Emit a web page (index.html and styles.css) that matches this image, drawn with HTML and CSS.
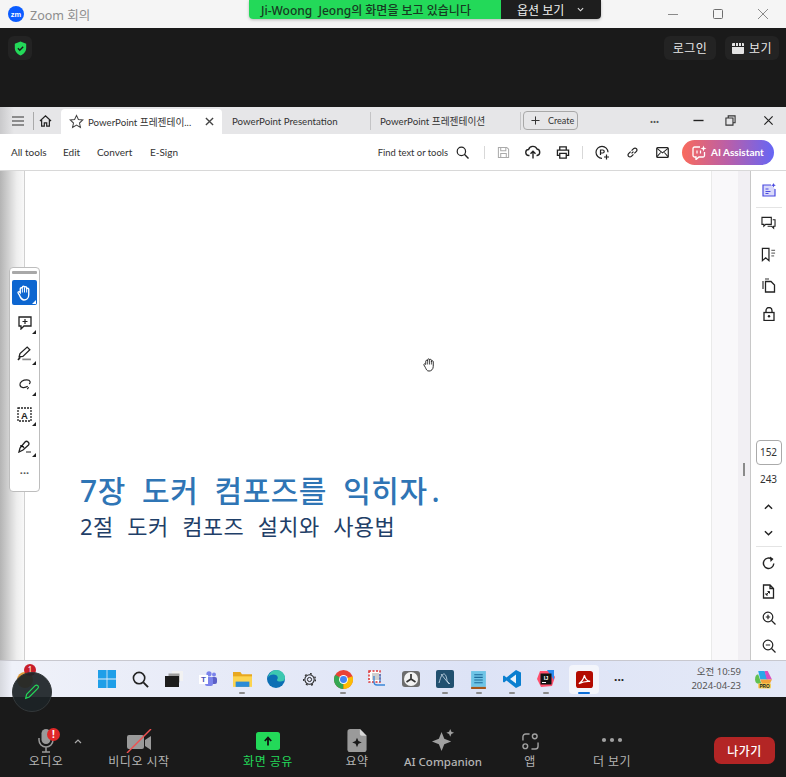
FILE: index.html
```html
<!DOCTYPE html>
<html lang="ko">
<head>
<meta charset="utf-8">
<title>Zoom 회의</title>
<link rel="stylesheet" href="styles.css">
</head>
<body>
<div class="app">
  <header class="titlebar">
    <svg class="zm-logo" viewBox="0 0 16 16" width="16" height="16"><circle cx="8" cy="8" r="8" fill="#0b5cff"/><text x="8" y="10.5" font-size="7.5" font-weight="700" text-anchor="middle" fill="#fff" font-family="Liberation Sans">zm</text></svg>
    <span class="title-text">Zoom 회의</span>
    <div class="win-ctrls">
      <svg viewBox="0 0 12 12" width="12" height="12"><path d="M1 6.500h10" stroke="#8a8a8a" fill="none"/></svg>
      <svg viewBox="0 0 12 12" width="12" height="12"><rect x="1.500" y="1.500" width="9" height="9" rx="1" stroke="#6e6e6e" fill="none"/></svg>
      <svg viewBox="0 0 12 12" width="12" height="12"><path d="M1 1l10 10M11 1L1 11" stroke="#8a8a8a" fill="none"/></svg>
    </div>
  </header>

  <section class="zoom-top">
    <div class="shield-btn">
      <svg viewBox="0 0 16 18" width="13" height="15"><path d="M8 .5l7 2.600v5.200c0 4.300-3 7.600-7 9.200-4-1.600-7-4.900-7-9.200V3.100z" fill="#23d959"/><path d="M4.800 8.800l2.300 2.300 4.200-4.300" stroke="#1a1a1a" stroke-width="1.700" fill="none"/></svg>
    </div>
    <div class="top-actions">
      <div class="dark-btn btn-login">로그인</div>
      <div class="dark-btn btn-view">
        <svg viewBox="0 0 12 11" width="12" height="11"><path d="M0 4h12v6a1 1 0 0 1-1 1H1a1 1 0 0 1-1-1z M1 0h2v3H0V1a1 1 0 0 1 1-1z M4 0h2v3H4z M7 0h2v3H7z M10 0h1a1 1 0 0 1 1 1v2h-2z" fill="#e4e4e4"/></svg>
        <span>보기</span>
      </div>
    </div>
  </section>

  <section class="acrobat">
    <nav class="tabbar">
      <svg class="menu-ic" viewBox="0 0 12 10" width="12" height="10"><path d="M0 1h12M0 5h12M0 9h12" stroke="#333" stroke-width="1.100"/></svg>
      <i class="tab-sep first"></i>
      <svg class="home-ic" viewBox="0 0 14 13" width="13" height="12"><path d="M1 6.500L7 1l6 5.500M2.800 5.500V12h2.900V8.500h2.600V12h2.900V5.500" stroke="#222" stroke-width="1.300" fill="none"/></svg>
      <div class="tab active">
        <svg viewBox="0 0 16 16" width="15" height="15"><path d="M8 1.500l2 4.400 4.700.5-3.500 3.200 1 4.700L8 11.900 3.800 14.300l1-4.700L1.300 6.400 6 5.900z" stroke="#444" stroke-width="1.100" fill="none"/></svg>
        <span class="tab-name">PowerPoint 프레젠테이...</span>
        <svg class="tab-x" viewBox="0 0 10 10" width="9" height="9"><path d="M1 1l8 8M9 1L1 9" stroke="#444" stroke-width="1.500"/></svg>
      </div>
      <div class="tab tab2">PowerPoint Presentation</div>
      <i class="tab-sep"></i>
      <div class="tab tab3">PowerPoint 프레젠테이션</div>
      <i class="tab-sep"></i>
      <div class="create"><svg viewBox="0 0 10 10" width="9" height="9"><path d="M5 .5v9M.5 5h9" stroke="#333" stroke-width="1.100"/></svg><span>Create</span></div>
      <div class="acro-win">
        <span class="dots">···</span>
        <svg class="aw-min" viewBox="0 0 12 12" width="11" height="11"><path d="M.5 6h11" stroke="#222" stroke-width="1.500"/></svg>
        <svg class="aw-max" viewBox="0 0 12 12" width="11" height="11"><path d="M3.500 3V1h7.500v7.500H9M1 3.300h7.700V11H1z" stroke="#333" stroke-width="1.200" fill="none"/></svg>
        <svg class="aw-close" viewBox="0 0 12 12" width="11" height="11"><path d="M1.500 1.500l9 9M10.500 1.500l-9 9" stroke="#222" stroke-width="1.300"/></svg>
      </div>
    </nav>
    <div class="toolbar">
      <div class="menu"><span class="m1">All tools</span><span class="m2">Edit</span><span class="m3">Convert</span><span>E-Sign</span></div>
      <div class="tools">
        <span class="find">Find text or tools</span>
        <svg viewBox="0 0 14 14" width="13" height="13"><circle cx="5.800" cy="5.800" r="4.500" stroke="#222" stroke-width="1.300" fill="none"/><path d="M9 9l4.500 4.500" stroke="#222" stroke-width="1.500"/></svg>
        <i class="tool-sep s1"></i>
        <svg viewBox="0 0 14 14" width="13" height="13"><path d="M1.500 1.500h9l2 2v9h-11zM4 1.500v3.500h5.500v-3.500M4 12.500V8h6v4.500" stroke="#aaa" stroke-width="1.100" fill="none"/></svg>
        <svg class="t-upload" viewBox="0 0 16 14" width="16" height="14"><path d="M4.500 10.500H4a3 3 0 0 1-.4-6A4.500 4.500 0 0 1 12 4a3.300 3.300 0 0 1 0 6.500h-.5M8 13.500V6.500M5.500 8.800L8 6.300l2.500 2.500" stroke="#222" stroke-width="1.400" fill="none"/></svg>
        <svg class="t-print" viewBox="0 0 14 14" width="14" height="13"><path d="M3.500 4V1h7v3M3.500 10H1V4.500h12V10h-2.500M3.500 8h7v5h-7z" stroke="#222" stroke-width="1.400" fill="none"/></svg>
        <i class="tool-sep"></i>
        <svg class="t-share" viewBox="0 0 15 15" width="15" height="15"><path d="M7 13.300A6 6 0 1 1 13 7.300M5.500 10V5h2.200a1.500 1.500 0 0 1 0 3H5.500M11.500 9.500v5M9 12h5" stroke="#222" stroke-width="1.200" fill="none"/></svg>
        <svg class="t-link" viewBox="0 0 14 14" width="13" height="13"><path d="M6 8l2-2M5 6L2.800 8.200a2.100 2.100 0 0 0 3 3L8 9M6 5l2.200-2.200a2.100 2.100 0 0 1 3 3L9 8" stroke="#222" stroke-width="1.300" fill="none"/></svg>
        <svg class="t-mail" viewBox="0 0 14 12" width="13" height="11"><rect x=".7" y=".7" width="12.600" height="10.600" rx="1" stroke="#222" stroke-width="1.300" fill="none"/><path d="M1 1.500l6 5 6-5M1 10.500l4-4.500M13 10.500L9 6" stroke="#222" stroke-width="1.100" fill="none"/></svg>
        <div class="ai-btn">
          <svg viewBox="0 0 15 15" width="15" height="15"><path d="M8 2H2.500A1.500 1.500 0 0 0 1 3.500v7A1.500 1.500 0 0 0 2.500 12H4v2.500L7 12h4a1.500 1.500 0 0 0 1.500-1.500V7" stroke="#fff" stroke-width="1.300" fill="none"/><path d="M11.500.5l.8 2.200 2.200.8-2.200.8-.8 2.200-.8-2.200-2.200-.8 2.200-.8z" fill="#fff"/><path d="M5 5.500v3M8.500 5.500v3" stroke="#fff" stroke-width="1.200"/></svg>
          <span>AI Assistant</span>
        </div>
      </div>
    </div>
    <div class="workspace">
      <div class="gutter"></div>
      <main class="page">
        <h1 class="h-main">7장 도커 컴포즈를 익히자<span class="period">.</span></h1>
        <h2 class="h-sub">2절 도커 컴포즈 설치와 사용법</h2>
      </main>
      <div class="scroller"><i class="scroll-thumb"></i></div>
      <aside class="rail">
        <div class="rail-top">
          <svg viewBox="0 0 14 14" width="14" height="14"><path d="M9 2H1v11h12V6" stroke="#4b4be0" stroke-width="1.200" fill="#d9d9fa"/><path d="M3.500 6h3M3.500 8.500h5M3.500 10.500h3" stroke="#4b4be0" stroke-width="1"/><path d="M11.500 0l.7 1.600 1.600.7-1.600.7-.7 1.600-.7-1.600-1.600-.7 1.600-.7z" fill="#4b4be0"/></svg>
          <i class="rail-line"></i>
          <svg class="r-comment" viewBox="0 0 16 15" width="15" height="14"><path d="M1 1.500h10v7.500H5l-2 2V9H1z" stroke="#222" stroke-width="1.200" fill="none"/><path d="M12.500 4H15v7h-1.500v2l-2-2H7" stroke="#222" stroke-width="1.200" fill="none"/></svg>
          <svg class="r-mark" viewBox="0 0 16 15" width="15" height="15"><path d="M1.500 1h7v13L5 11l-3.500 3z" stroke="#222" stroke-width="1.300" fill="none"/><path d="M11 3h4M11 6h4M11 9h3" stroke="#444"/></svg>
          <svg class="r-pages" viewBox="0 0 14 15" width="14" height="15"><path d="M3 1H7M1 3v8" stroke="#333" stroke-width="1.200" fill="none"/><path d="M3.500 3.500H9l3.500 3.500v7h-9z" stroke="#222" stroke-width="1.300" fill="none"/></svg>
          <svg class="r-lock" viewBox="0 0 12 14" width="12" height="14"><rect x="1" y="5.500" width="10" height="8" stroke="#222" stroke-width="1.300" fill="none"/><path d="M3 5.500V3.500a3 3 0 0 1 6 0v2" stroke="#222" stroke-width="1.300" fill="none"/><circle cx="6" cy="9.300" r="1.200" fill="#222"/></svg>
        </div>
        <div class="rail-bottom">
          <div class="page-input">152</div>
          <div class="page-total">243</div>
          <svg class="chev-up" viewBox="0 0 10 6" width="9" height="6"><path d="M1 5l4-4 4 4" stroke="#222" stroke-width="1.600" fill="none"/></svg>
          <svg class="chev-down" viewBox="0 0 10 6" width="9" height="6"><path d="M1 1l4 4 4-4" stroke="#222" stroke-width="1.600" fill="none"/></svg>
          <i class="rail-line wide"></i>
          <svg class="r-rot" viewBox="0 0 14 14" width="14" height="14"><path d="M11.800 7.500A5.200 5.200 0 1 1 10 3.300" stroke="#222" stroke-width="1.400" fill="none"/><path d="M8 .5l3.500 2.500L8.500 6z" fill="#222"/></svg>
          <svg class="r-doc" viewBox="0 0 14 15" width="14" height="15"><path d="M1.500 1h6.500l3.500 3.500V14h-10zM8 1v3.500h3.500" stroke="#222" stroke-width="1.300" fill="none"/><path d="M4 11l3.500-3.500M4 9v2h2M7.500 9.500v-2h-2" stroke="#222" fill="none"/></svg>
          <svg class="r-zi" viewBox="0 0 14 14" width="14" height="14"><circle cx="6" cy="6" r="4.800" stroke="#222" stroke-width="1.200" fill="none"/><path d="M9.500 9.500l4 4M3.800 6h4.400M6 3.800v4.400" stroke="#222" stroke-width="1.200"/></svg>
          <svg class="r-zo" viewBox="0 0 14 14" width="14" height="14"><circle cx="6" cy="6" r="4.800" stroke="#222" stroke-width="1.200" fill="none"/><path d="M9.500 9.500l4 4M3.800 6h4.400" stroke="#222" stroke-width="1.200"/></svg>
        </div>
      </aside>
    </div>
    <footer class="taskbar">
      <div class="task-icons">
        <div class="ti"><svg viewBox="0 0 18 18" width="18" height="18"><path d="M0 0h8.600v8.600H0zM9.400 0H18v8.600H9.400zM0 9.400h8.600V18H0zM9.400 9.400H18V18H9.400z" fill="#1f9fe8"/></svg></div>
        <div class="ti"><svg viewBox="0 0 18 18" width="17" height="17"><circle cx="7.500" cy="7.500" r="6" stroke="#222" stroke-width="1.700" fill="none"/><path d="M12 12l5 5" stroke="#222" stroke-width="2"/></svg></div>
        <div class="ti"><svg viewBox="0 0 18 16" width="18" height="16"><rect x="7" y="0" width="11" height="10" fill="#f2f2f2"/><rect x="3.500" y="2.500" width="11" height="9" fill="#9d9d9d"/><rect x="0" y="5" width="14" height="11" fill="#1c1c1c"/></svg></div>
        <div class="ti"><svg viewBox="0 0 18 16" width="18" height="16"><circle cx="15" cy="3.500" r="2" fill="#7b83eb"/><circle cx="10" cy="2.800" r="2.600" fill="#7b83eb"/><rect x="12" y="6" width="6" height="7" rx="2" fill="#5b5fc7"/><rect x="6" y="6" width="8" height="9" rx="2" fill="#7b83eb"/><rect y="4" width="9" height="9" fill="#fff"/><text x="4.500" y="11" font-size="8" font-weight="700" text-anchor="middle" fill="#4b53bc" font-family="Liberation Sans">T</text></svg></div>
        <div class="ti run"><svg viewBox="0 0 18 16" width="19" height="17"><path d="M0 1h7l1.500 2H18v3H0z" fill="#e8a820"/><path d="M0 5h18v10H0z" fill="#fcd450"/><rect x="2.500" y="10" width="13" height="5" fill="#2a8bd6"/></svg></div>
        <div class="ti"><svg viewBox="0 0 18 18" width="18" height="18"><circle cx="9" cy="9" r="9" fill="#0c6fb4"/><path d="M1 7.500C2 3 5.500 0 9 0c5 0 9 3.500 9 8 0 2.500-2 3.500-4.500 3.500-2 0-3.500-.5-3.500-1.500 0-.8.8-1 .8-2.300C10.800 5.500 8.500 4.500 6.500 4.500 4 4.500 2 5.500 1 7.500z" fill="#3cc8b0"/></svg></div>
        <div class="ti"><svg viewBox="0 0 16 16" width="15" height="15"><circle cx="8" cy="8" r="2.200" stroke="#222" fill="none"/><circle cx="8" cy="8" r="5" stroke="#222" stroke-width="1.100" fill="none"/><circle cx="8" cy="8" r="6.300" stroke="#222" stroke-width="1.300" fill="none" stroke-dasharray="2 3.900"/></svg></div>
        <div class="ti run"><svg viewBox="0 0 18 18" width="19" height="19"><circle cx="9" cy="9" r="9" fill="#e94235"/><path d="M9 9L1.200 4.500A9 9 0 0 0 9 18z" fill="#34a853"/><path d="M9 9v9A9 9 0 0 0 17.500 6z" fill="#fbbc05"/><circle cx="9" cy="9" r="4.200" fill="#fff"/><circle cx="9" cy="9" r="3.300" fill="#4285f4"/></svg></div>
        <div class="ti"><svg viewBox="0 0 18 18" width="18" height="18"><rect x="1" y="1" width="11" height="11" fill="#fff" stroke="#d33" stroke-width="1.500" stroke-dasharray="2 1.500"/><rect x="4" y="3" width="7" height="7" fill="#cfcfcf"/><path d="M6 6v6a3 3 0 0 0 3 3h8M12 4v8" stroke="#3a86d8" stroke-width="1.300" fill="none"/></svg></div>
        <div class="ti"><svg viewBox="0 0 18 18" width="18" height="18"><rect x="0" y="1" width="18" height="16" rx="3" fill="#6d6d6d"/><circle cx="9" cy="9" r="7" fill="#f3f3f3"/><path d="M9 9V4M9 9L4.500 12M9 9l4.500 3" stroke="#333" stroke-width="1.700"/></svg></div>
        <div class="ti run"><svg viewBox="0 0 18 18" width="18" height="18"><rect width="18" height="18" rx="2" fill="#21506f"/><path d="M3 13c2-7 3-9 5-9 2 0 3 5 3 7l3 3M5 4l8 10" stroke="#cfe0ee" stroke-width=".8" fill="none"/></svg></div>
        <div class="ti run"><svg viewBox="0 0 14 18" width="15" height="19"><rect x="0" y="1" width="14" height="15" fill="#6ec4e6"/><path d="M3 4.500h8M3 7h8M3 9.500h8M3 12h8" stroke="#1e6a9a"/><rect y="16" width="14" height="2" fill="#a5561b"/></svg></div>
        <div class="ti run"><svg viewBox="0 0 18 18" width="18" height="18"><path d="M13 0l5 2.500v13L13 18 3.500 10.500 1 12.500 0 11.800V6.200l1-.7 2.500 2z" fill="#0a7fd0"/><path d="M13 4.500L7 9l6 4.500z" fill="#e9f3fb"/></svg></div>
        <div class="ti run"><svg viewBox="0 0 18 18" width="18" height="18"><path d="M3 1h11l4 6-3 9-11 1-4-8z" fill="#ff4f6d"/><path d="M10 0h7v10z" fill="#2b8bf0"/><rect x="3.500" y="3.500" width="11" height="11" fill="#111"/><text x="9" y="10" font-size="5.500" font-weight="700" text-anchor="middle" fill="#fff" font-family="Liberation Sans">IJ</text><path d="M5 12.500h4" stroke="#fff"/></svg></div>
        <div class="task-active">
          <svg viewBox="0 0 18 18" width="17" height="17"><rect width="18" height="18" rx="3" fill="#b30b00"/><path d="M3 13.500c3-2 5-5 6-9 .5 4 3 6 6 6.500-4-.5-8 .5-12 2.500z" stroke="#fff" stroke-width="1.300" fill="none"/></svg>
          <i class="active-bar"></i>
        </div>
        <span class="task-more">···</span>
      </div>
      <div class="clock"><span>오전 10:59</span><span>2024-04-23</span></div>
      <svg class="copilot" viewBox="0 0 18 18" width="19" height="19"><path d="M4 1h6l3 8H6z" fill="#29a8e8"/><path d="M10 1h3l4 8h-5z" fill="#d94fc0"/><path d="M1 9c0-3 1-5 3-5l3 9H4c-2 0-3-2-3-4z" fill="#60c050"/><path d="M6 9h11l-3 6H8z" fill="#f2a33a"/><rect x="4" y="12.500" width="12" height="5" rx="1" fill="#f5cd50"/><text x="10" y="16.800" font-size="4.500" font-weight="700" text-anchor="middle" fill="#222" font-family="Liberation Sans">PRO</text></svg>
    </footer>
  </section>

  <footer class="controls">
    <div class="ctl ctl-audio">
      <svg viewBox="0 0 16 24" width="16" height="24"><rect x="3.500" y="0" width="9" height="15" rx="4.500" fill="#9a9a9a"/><path d="M1 9v2a7 7 0 0 0 14 0V9M8 18v5M4 23h8" stroke="#9a9a9a" stroke-width="1.500" fill="none"/></svg>
      <span>오디오</span>
    </div>
    <div class="ctl ctl-video">
      <svg viewBox="0 0 26 24" width="26" height="24"><path d="M1 8a2 2 0 0 1 2-2h13a2 2 0 0 1 2 2v10a2 2 0 0 1-2 2H3a2 2 0 0 1-2-2z M19 11l6-4v14l-6-4z" fill="#9a9a9a"/><path d="M1 24L25 0" stroke="#f05050" stroke-width="1.400"/></svg>
      <span>비디오 시작</span>
    </div>
    <div class="ctl ctl-share">
      <svg class="share-ic" viewBox="0 0 24 18" width="24" height="18"><rect width="24" height="18" rx="2.500" fill="#23d959"/><path d="M12 13.500V6M8.800 9L12 5.500 15.200 9" stroke="#111" stroke-width="1.800" fill="none"/></svg>
      <span>화면 공유</span>
    </div>
    <div class="ctl ctl-sum">
      <svg viewBox="0 0 20 24" width="20" height="23"><path d="M3 0h10l7 7v14a3 3 0 0 1-3 3H3a3 3 0 0 1-3-3V3a3 3 0 0 1 3-3z" fill="#9a9a9a"/><path d="M13 0v5a2 2 0 0 0 2 2h5z" fill="#d8d8d8"/><path d="M10 9l1.500 3.500L15 14l-3.500 1.500L10 19l-1.500-3.500L5 14l3.500-1.500z" fill="#1a1a1a"/></svg>
      <span>요약</span>
    </div>
    <div class="ctl ctl-ai">
      <svg viewBox="0 0 26 26" width="25" height="25"><path d="M11 3l2.800 7.200L21 13l-7.200 2.800L11 23l-2.800-7.200L1 13l7.200-2.800z" fill="#a0a0a0"/><path d="M20 0l1.200 2.800L24 4l-2.800 1.200L20 8l-1.200-2.800L16 4l2.800-1.200z" fill="#a0a0a0"/></svg>
      <span>AI Companion</span>
    </div>
    <div class="ctl ctl-apps">
      <svg viewBox="0 0 18 18" width="17" height="17"><circle cx="13.500" cy="3.500" r="2.500" stroke="#a0a0a0" stroke-width="1.500" fill="none"/><circle cx="3.500" cy="14" r="2.500" stroke="#a0a0a0" stroke-width="1.500" fill="none"/><path d="M1 8V4a3 3 0 0 1 3-3h4M10 17h4a3 3 0 0 0 3-3v-4" stroke="#a0a0a0" stroke-width="1.500" fill="none"/></svg>
      <span>앱</span>
    </div>
    <div class="ctl ctl-more">
      <svg viewBox="0 0 22 6" width="22" height="6"><circle cx="3" cy="3" r="2.100" fill="#a0a0a0"/><circle cx="11" cy="3" r="2.100" fill="#a0a0a0"/><circle cx="19" cy="3" r="2.100" fill="#a0a0a0"/></svg>
      <span>더 보기</span>
    </div>
    <div class="leave">나가기</div>
  </footer>
</div>

<div class="share-banner">
  <div class="banner-green">Ji-Woong&nbsp; Jeong의 화면을 보고 있습니다</div>
  <div class="banner-dark"><span>옵션 보기</span><svg viewBox="0 0 8 5" width="7" height="5"><path d="M1 1l3 3 3-3" stroke="#ddd" stroke-width="1.300" fill="none"/></svg></div>
</div>

<div class="float-tools">
  <i class="grip"></i>
  <div class="ft ft-hand"><svg viewBox="0 0 16 16" width="17" height="17"><path d="M4 8V4.500a1 1 0 0 1 2 0V3a1 1 0 0 1 2 0v.5a1 1 0 0 1 2 0V5a1 1 0 0 1 2 0v5c0 3-2 5-4.500 5S4.500 13 3.500 11L2 8.500c-.5-1 1-1.800 2-.5z" fill="none" stroke="#fff" stroke-width="1.300"/><path d="M6 4.500V8M8 3.500V8M10 4.500V8" stroke="#fff" stroke-width=".9"/></svg><b class="corner light"></b></div>
  <div class="ft"><svg viewBox="0 0 14 14" width="14" height="14"><path d="M1 1h12v9H6l-3 3v-3H1z" stroke="#222" stroke-width="1.300" fill="none"/><path d="M7 3v5M4.500 5.500h5" stroke="#222" stroke-width="1.200"/></svg><b class="corner"></b></div>
  <div class="ft"><svg viewBox="0 0 14 14" width="15" height="15"><path d="M2 10l.8-3L9.500 1l2.500 2.500-6.500 6.200z" stroke="#222" stroke-width="1.200" fill="none"/><path d="M1 13l2-2.500" stroke="#222" stroke-width="1.600"/><path d="M5 12.500h8" stroke="#888" stroke-width="1.600"/></svg><b class="corner"></b></div>
  <div class="ft"><svg viewBox="0 0 14 12" width="14" height="11"><path d="M10 8c-3 2-8 2-8.500-1.500C1 3 5 1 9 1s4.500 3 2.500 4.500M11 9l-1.500 2" stroke="#222" stroke-width="1.300" fill="none"/></svg><b class="corner"></b></div>
  <div class="ft"><svg viewBox="0 0 15 15" width="15" height="15"><rect x="1" y="1" width="13" height="13" stroke="#222" stroke-width="1.300" fill="none" stroke-dasharray="2 1"/><text x="7.500" y="11.500" font-size="9.500" font-weight="700" text-anchor="middle" fill="#222" font-family="Liberation Sans">A</text></svg><b class="corner"></b></div>
  <div class="ft"><svg viewBox="0 0 15 14" width="15" height="14"><path d="M2 13l1-4 5-6c2-2 5 1 3.500 3L6 11z" stroke="#222" stroke-width="1.300" fill="none"/><path d="M3 7c2-1 4 0 4 2M9 13h5" stroke="#222"/></svg><b class="corner"></b></div>
  <div class="ft-more">···</div>
</div>

<svg class="hand-cursor" viewBox="0 0 16 16" width="15" height="15"><path d="M4 8V4.500a1 1 0 0 1 2 0V3a1 1 0 0 1 2 0v.5a1 1 0 0 1 2 0V5a1 1 0 0 1 2 0v5c0 3-2 5-4.500 5S4.500 13 3.500 11L2 8.500c-.5-1 1-1.800 2-.5z" fill="#fff" stroke="#222" stroke-width="1"/><path d="M6 4.500V8M8 3.500V8M10 4.500V8" stroke="#222" stroke-width=".8"/></svg>

<div class="annot-orange"></div>
<div class="annot-badge">1</div>
<div class="annot">
  <svg viewBox="0 0 20 20" width="18" height="18"><path d="M3 17l1-4.500L13.500 3c1-1 2-1 3 0s1 2 0 3L7 15.500z" stroke="#23d959" stroke-width="1.300" fill="none"/></svg>
</div>
<div class="mic-alert">!</div>
<svg class="mic-caret" viewBox="0 0 8 5" width="8" height="5"><path d="M1 4l3-3 3 3" stroke="#aaa" stroke-width="1.200" fill="none"/></svg>
</body>
</html>
```

FILE: styles.css
```css
* { box-sizing: border-box; }
html, body { margin: 0; padding: 0; }
body {
  width: 786px;
  height: 777px;
  overflow: hidden;
  font-family: "Noto Sans", "Noto Sans CJK KR", sans-serif;
  position: relative;
  background: #1a1a1a;
}
i, b { display: block; }
.app { display: flex; flex-direction: column; height: 777px; }

.titlebar {
  flex: 0 0 28px;
  background: #f5f5f5;
  display: flex;
  align-items: center;
  padding: 0 0 0 8px;
}
.title-text { margin-left: 6px; font-size: 12.500px; color: #8d8d8d; }
.win-ctrls { margin-left: auto; display: flex; gap: 33px; padding-right: 17px; }

.zoom-top {
  flex: 0 0 79px;
  background: #1a1a1a;
  display: flex;
  justify-content: space-between;
  align-items: flex-start;
  padding: 8px 7px 0 8px;
}
.shield-btn {
  width: 24px; height: 24px;
  border-radius: 6px;
  background: #232323;
  display: flex; align-items: center; justify-content: center;
}
.top-actions { display: flex; gap: 9px; }
.dark-btn {
  height: 24px;
  border-radius: 6px;
  background: #232323;
  color: #e8e8e8;
  font-size: 12px;
  letter-spacing: .5px;
  display: flex; align-items: center; gap: 5px;
}
.btn-login { width: 52px; justify-content: center; }
.btn-view { width: 54px; justify-content: center; }
.acrobat {
  flex: 0 0 590px;
  display: flex; flex-direction: column;
  background: #fff;
  font-family: Lato, "Noto Sans CJK KR", sans-serif;
}

.tabbar {
  flex: 0 0 27px;
  background: linear-gradient(90deg, #c9c9cb, #e6e6e8 14px);
  display: flex;
  align-items: center;
  padding-left: 12px;
  color: #333;
}
.tab-sep { width: 1px; height: 18px; background: #c4c4c6; }
.tab-sep.first { margin-left: 9px; background: #aaa; }
.home-ic { margin-left: 5px; }
.tab { font-size: 9.700px; white-space: nowrap; }
.tab.active {
  align-self: flex-end;
  height: 25px;
  width: 161px;
  margin-left: 9px;
  background: #fff;
  border-radius: 4px 4px 0 0;
  display: flex; align-items: center;
  padding: 0 8px;
}
.tab-name { margin-left: 4px; flex: 1; overflow: hidden; }
.tab-x { flex: none; }
.tab2 { width: 148px; padding-left: 10px; }
.tab3 { width: 149px; padding-left: 9px; }
.create {
  margin-left: 2px;
  width: 55px; height: 19px;
  border: 1px solid #a8a8a8;
  border-radius: 4px;
  font-size: 9px;
  display: flex; align-items: center; gap: 8px;
  padding-left: 7px;
}
.acro-win {
  margin-left: auto;
  display: flex; align-items: center;
  padding-right: 12px;
}
.dots { font-size: 11px; font-weight: 700; color: #555; }
.aw-min { margin-left: 34px; }
.aw-max { margin-left: 21px; }
.aw-close { margin-left: 27px; }

.toolbar {
  flex: 0 0 37px;
  border-bottom: 1px solid #d8d8d8;
  display: flex; align-items: center; justify-content: space-between;
  padding: 0 12px 0 11px;
}
.menu { display: flex; font-size: 10px; color: #333; }
.m1 { width: 52px; }
.m2 { width: 34px; }
.m3 { width: 53px; }
.tools { display: flex; align-items: center; }
.find { font-size: 9.400px; color: #333; margin-right: 8px; }
.tool-sep { width: 1px; height: 13px; background: #d8d8d8; margin: 0 12px; }
.tool-sep.s1 { margin-left: 15px; }
.t-upload { margin-left: 15px; }
.t-print { margin-left: 15px; }
.t-link { margin-left: 16px; }
.t-mail { margin-left: 17px; }
.ai-btn {
  margin-left: 13px;
  width: 92px; height: 25px;
  border-radius: 13px;
  background: linear-gradient(90deg, #f96a5c, #b95fa9 50%, #6666f5);
  color: #fff;
  font-size: 10px;
  font-weight: 700;
  display: flex; align-items: center; gap: 4px;
  padding-left: 10px;
}

.workspace { flex: 0 0 489px; display: flex; min-height: 0; font-family: "Noto Sans", "Noto Sans CJK KR", sans-serif; }
.gutter {
  flex: 0 0 25px;
  background: linear-gradient(90deg, #b4b4b4, #eeeeee 70%, #f8f8f8);
  border-right: 1px solid #d0d0d0;
}
.page {
  flex: 1 1 0;
  min-width: 0;
  background: #fff;
  padding: 298px 0 0 55px;
  border-right: 1px solid #eaeaea;
}
.h-main {
  margin: 0;
  font-size: 30px;
  font-weight: 500;
  color: #2f75b5;
  word-spacing: 8px;
  line-height: 44px;
  letter-spacing: .5px;
  white-space: nowrap;
}
.period { margin-left: 4px; }
.h-sub {
  margin: -3px 0 0;
  font-size: 22px;
  font-weight: 400;
  color: #1f3f68;
  word-spacing: 7.500px;
  letter-spacing: .4px;
  line-height: 32px;
  white-space: nowrap;
}
.scroller {
  flex: 0 0 39px;
  background: linear-gradient(90deg, #f9f8fa 0 26px, #f1eff3 26px);
  position: relative;
  border-right: 1px solid #c8c8c8;
}
.scroll-thumb {
  position: absolute;
  left: 31px; top: 292px;
  width: 2px; height: 13px;
  background: #8a8a8a;
}
.rail {
  flex: 0 0 35px;
  background: #fff;
  display: flex; flex-direction: column; justify-content: space-between;
  padding: 12px 0 7px;
}
.rail-top, .rail-bottom { display: flex; flex-direction: column; align-items: center; }
.rail-line { width: 26px; height: 1px; background: #e4e4e4; margin-top: 10px; flex: none; }
.r-comment { margin-top: 8px; }
.r-mark { margin-top: 16.500px; }
.r-pages { margin-top: 16px; }
.r-lock { margin-top: 14.500px; }
.page-input {
  width: 26px; height: 25px;
  border: 1px solid #aaa;
  border-radius: 4px;
  font-size: 10px; color: #333;
  display: flex; align-items: center; justify-content: center;
}
.page-total { font-size: 10px; color: #333; line-height: 14px; margin-top: 7.500px; }
.chev-up { margin-top: 18px; }
.chev-down { margin-top: 20px; }
.rail-line.wide { margin-top: 10px; }
.r-rot { margin-top: 9px; }
.r-doc { margin-top: 13.500px; }
.r-zi { margin-top: 12.500px; }
.r-zo { margin-top: 14px; }

.taskbar {
  flex: 0 0 37px;
  background: linear-gradient(90deg, #d6d8de, #eff1f9 12px, #dde3f6 60%, #e4e9f7);
  border-top: 1px solid #c8c8cf;
  display: flex; align-items: center;
  padding-left: 90px;
}
.task-icons {
  display: grid;
  grid-template-columns: repeat(14, 33.800px) 42px 28px;
  justify-items: center;
  align-items: center;
}
.ti { position: relative; display: flex; align-items: center; justify-content: center; width: 30px; height: 30px; }
.ti.run::after {
  content: "";
  position: absolute;
  bottom: 0; left: 12px;
  width: 6px; height: 2px;
  border-radius: 1px;
  background: #8a8a8a;
}
.task-active {
  width: 30px; height: 29px;
  background: #f3f5fb;
  border-radius: 4px;
  display: flex; align-items: center; justify-content: center;
  position: relative;
}
.active-bar { position: absolute; bottom: 0; left: 9px; width: 12px; height: 2px; border-radius: 1px; background: #0a6cd6; }
.task-more { font-size: 12px; font-weight: 700; color: #222; font-family: "Noto Sans", sans-serif; }
.clock {
  margin-left: auto;
  display: flex; flex-direction: column; align-items: flex-end;
  font-size: 9.500px; color: #555; line-height: 14px;
  margin-right: 13px;
  font-family: "Noto Sans", "Noto Sans CJK KR", sans-serif;
}
.copilot { margin-right: 13px; }

.controls {
  flex: 1;
  background: #1a1a1a;
  display: flex;
  align-items: flex-start;
  padding-top: 32px;
  color: #b4b4b4;
}
.ctl {
  display: flex; flex-direction: column; align-items: center;
  height: 41px;
  justify-content: space-between;
  font-size: 12px;
  letter-spacing: .5px;
  white-space: nowrap;
  flex: none;
}
.ctl span { line-height: 16px; }
.ctl-audio { width: 92px; }
.ctl-video { width: 94px; }
.ctl-share { width: 80px; margin-left: 42px; color: #23d959; }
.share-ic { margin-top: 3px; }
.ctl-sum { width: 60px; margin-left: 19px; }
.ctl-ai { width: 90px; margin-left: 11px; letter-spacing: 0; font-size: 11.500px; font-weight: 500; }
.ctl-apps { width: 50px; margin-left: 17px; }
.ctl-more { width: 70px; margin-left: 22px; }
.ctl-more svg { margin-top: 8px; }
.ctl-apps svg { margin-top: 4px; }
.leave {
  margin-left: 67px;
  margin-top: 8px;
  width: 61px; height: 27px;
  border-radius: 7px;
  background: #b32525;
  color: #fff;
  font-size: 12px;
  letter-spacing: .5px;
  font-weight: 500;
  display: flex; align-items: center; justify-content: center;
}

/* Overlays */
.share-banner {
  position: absolute;
  left: 249px; top: 0;
  display: flex;
  height: 19px;
  font-size: 12px;
  box-shadow: 0 1px 3px rgba(0,0,0,.25);
  border-radius: 0 0 4px 4px;
  overflow: hidden;
}
.banner-green {
  width: 252px;
  background: #23d959;
  color: #173a22;
  display: flex; align-items: center;
  padding-left: 12px;
  font-weight: 500;
  white-space: pre;
}
.banner-dark {
  width: 100px;
  background: #1e1e1e;
  color: #f0f0f0;
  display: flex; align-items: center; gap: 13px;
  padding-left: 16px;
}
.float-tools {
  position: absolute;
  left: 9px; top: 267px;
  width: 31px; height: 225px;
  background: #fff;
  border: 1px solid #bdbdbd;
  border-radius: 4px;
  display: flex; flex-direction: column; align-items: center;
  padding-top: 3px;
  gap: 5.700px;
}
.grip { width: 25px; height: 3px; background: #a8a8a8; border-radius: 1px; flex: none; }
.ft {
  width: 25px; height: 25px;
  border-radius: 2px;
  display: flex; align-items: center; justify-content: center;
  position: relative;
  flex: none;
}
.ft-hand { background: #0d66d0; }
.corner {
  position: absolute; right: 1px; bottom: 1px;
  width: 0; height: 0;
  border-left: 4px solid transparent;
  border-bottom: 4px solid #222;
}
.corner.light { border-bottom-color: #fff; }
.ft-more { font-size: 11px; font-weight: 700; color: #555; line-height: 18px; }
.hand-cursor { position: absolute; left: 422px; top: 357px; }
.annot {
  position: absolute;
  left: 12px; top: 672px;
  width: 40px; height: 40px;
  border-radius: 50%;
  background: rgba(29, 36, 39, .93);
  border: 1px solid #33383a;
  display: flex; align-items: center; justify-content: center;
}
.annot-orange {
  position: absolute;
  left: 17px; top: 672px;
  width: 16px; height: 16px;
  border-radius: 50%;
  background: #e09a3a;
}
.annot-badge {
  position: absolute;
  left: 24px; top: 664px;
  width: 12px; height: 12px;
  border-radius: 50%;
  background: #c81e2a;
  color: #fff;
  font-size: 8px;
  line-height: 12px;
  text-align: center;
}
.mic-alert {
  position: absolute;
  left: 47px; top: 728px;
  width: 13px; height: 13px;
  border-radius: 50%;
  background: #e02828;
  color: #fff;
  font-size: 10px;
  font-weight: 700;
  line-height: 13px;
  text-align: center;
}
.mic-caret { position: absolute; left: 74px; top: 739px; }
```
